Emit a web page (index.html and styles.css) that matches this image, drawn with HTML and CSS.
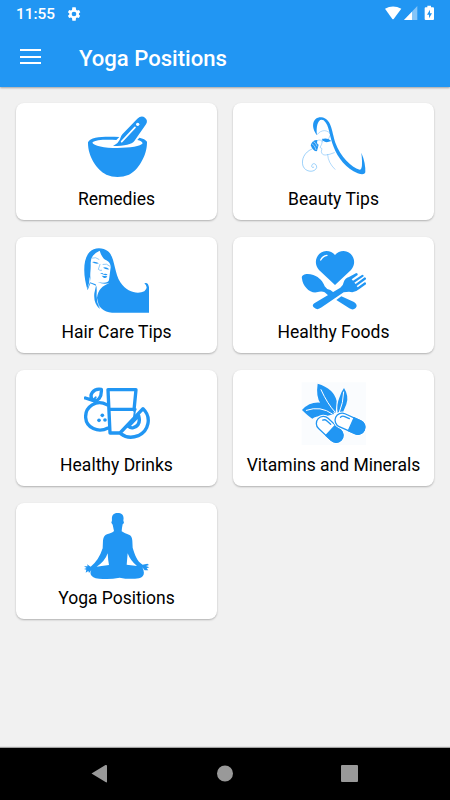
FILE: index.html
```html
<!DOCTYPE html>
<html lang="en">
<head>
<meta charset="utf-8">
<title>Yoga Positions</title>
<link rel="stylesheet" href="styles.css">
</head>
<body>
<div class="screen">
  <header class="header">
    <div class="status">
      <span class="clock">11:55</span>
      <svg class="gear" viewBox="0 0 24 24"><path fill-rule="evenodd" d="M19.400 13c.1-.6.1-1.400 0-2l2.100-1.600-2-3.500-2.500 1a7 7 0 0 0-1.700-1L14.500 2h-5L9 5.900a7 7 0 0 0-1.700 1l-2.500-1-2 3.500L4.900 11a8 8 0 0 0 0 2l-2.100 1.600 2 3.500 2.500-1a7 7 0 0 0 1.700 1l.5 3.900h5l.5-3.900a7 7 0 0 0 1.700-1l2.500 1 2-3.500zM12 15.500a3.500 3.500 0 1 1 0-7 3.500 3.500 0 0 1 0 7z"/></svg>
      <svg class="indicators" viewBox="0 0 150 48">
        <path d="M0 11Q24-2 49 11L26 42Q24 44 22 42z"/>
        <path opacity=".45" d="M97 3V45H57z"/><path d="M81 20V45H57z"/>
        <path fill-rule="evenodd" d="M127 2h11v5h6q3 0 3 3v32q0 3-3 3h-22q-3 0-3-3V10q0-3 3-3h5zM135 14l-9 15h6v11l9-15h-6z"/>
      </svg>
    </div>
    <div class="toolbar">
      <div class="menu"><i></i><i></i><i></i></div>
      <h1>Yoga Positions</h1>
    </div>
  </header>
  <main class="grid">
    <section class="card">
      <svg viewBox="27 17 198 198">
        <path d="M39 105C47 87 88 88 133 89L124 98C90 97 61 97 52 106C55 115 88 122 127 122C165 122 198 117 203 108Q201 101 187 98L193 91Q210 94 216 103C217 143 190 188 162 202Q127 216 94 202C64 188 38 145 39 105z"/>
        <path d="M187 34Q199 23 210 31Q220 39 213 51L178 101Q167 116 114 116Q132 107 136 93Q137 87 142 81z"/>
        <path class="white-line" stroke-width="5" d="M180 60L140 103"/><circle class="white" cx="188" cy="51" r="5"/>
      </svg><h2>Remedies</h2>
    </section>
    <section class="card">
      <svg viewBox="17 17 198 198">
        <path d="M65 84C43 55 55 28 78 30C108 33 109 70 120 106C135 147 168 180 193 187Q204 187 198 136Q211 166 210 195Q207 205 187 198C153 184 127 151 115 119C102 89 103 54 85 39C70 30 61 53 65 84z"/>
        <path d="M79 97Q93 89 108 101Q92 108 84 101zM46 114Q51 97 67 98Q62 109 70 112L65 131Q54 134 46 114z"/>
        <g class="line" stroke-width="1.500"><path opacity=".7" d="M65 82C79 65 97 66 108 83M82 94L79 111L74 120L80 124L78 132Q79 144 91 143Q103 142 117 136M97 142Q98 166 119 186M105 83L98 98M69 98Q76 94 82 104"/><path stroke-width="2" opacity=".65" d="M50 125C27 134 17 157 23 176C30 195 58 197 64 181C65 168 50 164 49 177Q50 182 55 180"/></g>
        <path class="white-line" stroke-width="1.500" d="M51 110Q59 113 62 127M55 103Q62 106 65 116"/>
      </svg><h2>Beauty Tips</h2>
    </section>
    <section class="card">
      <svg viewBox="27 15 198 198">
        <path d="M38 145C25 105 22 54 43 31C57 15 83 15 99 28C120 45 117 91 136 121C156 151 188 158 208 148Q222 136 208 124Q219 119 222 136V212H111C84 210 66 193 69 168L74 201Q55 184 58 154L63 131L46 124z"/>
        <path class="white" d="M48 118C43 100 48 87 47 65Q46 38 74 26Q82 51 94 55Q107 61 107 76L102 114Q99 124 82 122L68 121Q84 128 103 124C82 132 69 143 66 168L74 201Q63 178 65 153Q66 134 62 127L45 121L36 144Q44 124 44 105z"/>
        <path d="M51 60Q61 57 72 64Q62 67 51 60zM84 77Q93 73 103 82Q94 84 84 77zM75 94Q82 91 86 96Q94 93 98 99L91 100zM80 101L97 103Q94 110 86 107z"/>
        <g class="line" stroke-width="1.500"><path d="M52 48Q62 44 72 52M84 67Q95 63 104 72M75 67L70 82Q75 87 80 85"/></g>
      </svg><h2>Hair Care Tips</h2>
    </section>
    <section class="card">
      <svg viewBox="32 15 198 198">
        <path d="M134 129L86 84C66 62 80 28 108 27Q124 27 134 39Q144 27 160 27C188 28 202 62 182 84z"/>
        <path class="white-line" stroke-width="4" d="M91 54Q97 42 110 40"/>
        <path d="M35 110C31 97 50 92 69 99C88 106 98 119 103 133Q108 142 120 144L131 152L115 161L103 151Q94 146 79 151C57 154 37 131 35 110z"/>
        <path d="M77 181L150 137Q159 131 160 121Q163 109 176 105L198 93Q204 94 202 99L184 112L188 116L216 98Q221 98 220 103L192 122L196 126L223 106Q229 107 227 112L199 132L202 136L223 121Q229 121 227 127L206 142Q193 154 176 149L160 151L94 196Q80 207 70 196Q62 188 77 181zM153 163L191 180Q204 189 196 198Q188 206 177 199L138 174z"/>
      </svg><h2>Healthy Foods</h2>
    </section>
    <section class="card">
      <svg viewBox="27 15 198 198">
        <g class="line" stroke-width="10">
          <path d="M95 89C65 72 30 95 32 128C34 158 69 175 99 159M99 44H183L177 105M99 44L105 174H137M102 103H180M31 69L56 77M54 76C40 61 54 39 79 43C81 68 68 80 54 76zM135 174L204 101C231 127 221 168 190 182Q160 194 137 176M160 154L191 122Q199 151 175 158Q167 160 160 154"/>
          <path stroke-width="6" d="M53 77L62 67M180 104L177 128"/>
        </g>
        <circle cx="82" cy="121" r="5.500"/><circle cx="72" cy="136" r="5.500"/><circle cx="90" cy="135" r="5.500"/>
      </svg><h2>Healthy Drinks</h2>
    </section>
    <section class="card">
      <svg viewBox="17 15 198 198">
        <path class="tint" d="M19 22H212V210H19z"/>
        <path d="M67 26Q116 41 124 78L121 113Q92 109 76 86Q61 65 67 26zM146 39Q162 64 153 88L143 112L127 114Q123 89 132 68Q137 51 146 39zM20 105Q47 76 85 85Q109 92 116 117L92 124Q65 120 51 131Q39 124 20 105z"/>
        <g class="white-line" stroke-width="3"><path d="M77 44Q97 88 119 111M145 51Q144 83 132 112M33 106Q76 91 111 117"/></g>
        <g class="pill" transform="translate(103 163) rotate(43)"><rect class="halo" x="-50" y="-24" width="100" height="48" rx="24"/><rect x="-47" y="-21" width="94" height="42" rx="21"/><path class="fill" d="M4-21H26A21 21 0 0 1 26 21H4z"/><path d="M-34-6Q-31-13-23-13H-8"/></g>
        <g class="pill" transform="translate(164 146) rotate(24)"><rect class="halo" x="-50" y="-24" width="100" height="48" rx="24"/><rect x="-47" y="-21" width="94" height="42" rx="21"/><path class="fill" d="M4-21H26A21 21 0 0 1 26 21H4z"/><path d="M-34-6Q-31-13-23-13H-8"/></g>
      </svg><h2>Vitamins and Minerals</h2>
    </section>
    <section class="card">
      <svg viewBox="27 15 198 198">
        <path d="M111 37C109 21 117 15 128 15C141 15 148 22 145 37L147 45L143 49Q141 58 140 70Q147 76 162 80Q171 83 172 98L173 119C179 139 186 160 203 170L217 167L222 171L213 174L223 178L215 181L220 187L209 187L202 178Q215 204 192 211Q162 215 134 209Q93 216 62 211Q40 202 49 186L42 195L40 189L32 194L34 185L27 183L35 180L27 175L38 175L36 169L47 176Q71 158 83 121L84 97Q86 82 96 79Q112 75 117 69L113 50L109 44z"/>
        <path class="white" d="M98 136Q99 156 102 171L80 174L65 176Q90 160 98 136zM158 136Q166 158 186 174L155 170z"/>
      </svg><h2>Yoga Positions</h2>
    </section>
  </main>
  <nav class="navigation">
    <svg viewBox="0 0 450 52"><path d="M91.500 25.500L105.500 17Q107 16.500 107 18V33.500Q107 35 105.500 34zM217 25.500a8 8 0 1 0 16 0a8 8 0 1 0-16 0"/><rect x="341" y="17" width="17" height="17" rx="1"/></svg>
  </nav>
</div>
</body>
</html>
```

FILE: styles.css
```css
* { box-sizing: border-box; }
body { margin: 0; font-family: Roboto, sans-serif; background: #f1f1f1; }
svg { display: block; fill: #2196f3; }
.screen { width: 450px; height: 800px; display: flex; flex-direction: column; overflow: hidden; }
.header { height: 87px; background: #2196f3; color: #fff; box-shadow: 0 1px 2px #0005; }
.status { height: 28px; display: flex; align-items: center; padding: 0 15px 0 16px; }
.clock { font-size: 15.400px; font-weight: 500; line-height: 28px; }
.gear { width: 16px; height: 16px; margin-left: 11px; fill: #fff; margin-top: -1px; }
.indicators { width: 50px; height: 16px; margin-left: auto; fill: #fff; margin-top: -2px; }
.toolbar { height: 59px; display: flex; align-items: center; padding-left: 20px; }
.menu { width: 21px; height: 15px; margin-top: -2px; display: flex; flex-direction: column; justify-content: space-between; }
.menu i { height: 2px; background: #fff; }
h1 { margin: 0 0 0 38px; font-size: 22.100px; line-height: 28px; font-weight: 500; white-space: nowrap; }
.grid { flex: 1; display: grid; grid-template-columns: 201px 201px; grid-auto-rows: 116.600px; gap: 16.570px 16px; padding: 16.400px 16px; align-content: start; }
.card { background: #fff; border-radius: 8px; box-shadow: 0 1px 2px #0004; display: flex; flex-direction: column; align-items: center; padding-top: 10px; }
.card svg { width: 66px; height: 66px; }
h2 { margin: 7.120px 0 0; font-size: 17.500px; line-height: 24px; font-weight: 400; color: #000; white-space: nowrap; }
.white { fill: #fff; }
.white-line { stroke: #fff; fill: none; stroke-linecap: round; }
.line { stroke: #2196f3; fill: none; stroke-linejoin: round; stroke-linecap: round; }
.tint { fill: #fafcfe; }
.pill { stroke: #2196f3; stroke-width: 4; fill: none; stroke-linecap: round; }
.pill rect { fill: #fff; }
.pill .halo { stroke: #fff; }
.pill .fill { fill: #2196f3; }
.navigation { height: 52px; background: #000; box-shadow: 0 -1px 1px #0005; }
.navigation svg { width: 450px; height: 52px; fill: #999; }
```
